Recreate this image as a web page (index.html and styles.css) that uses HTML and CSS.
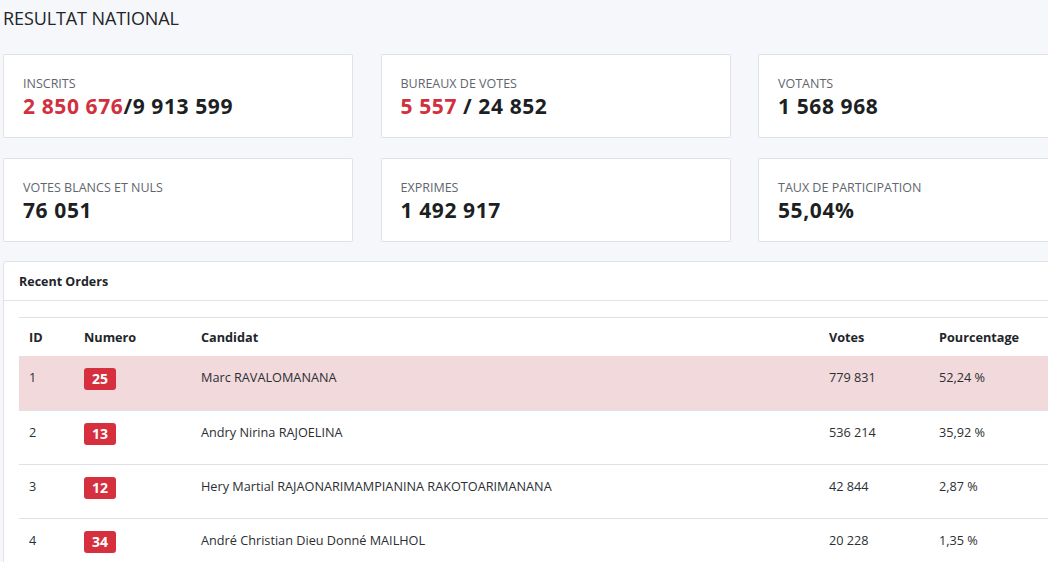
FILE: index.html
```html
<!DOCTYPE html>
<html>

<head>
  <title>Resultat National</title>
  <link rel="stylesheet" href="styles.css">
</head>

<body>
  <div class="page">
    <h1 class="page-title">RESULTAT NATIONAL</h1>

    <div class="stats">
      <div class="stat-card">
        <div class="stat-label">Inscrits</div>
        <div class="stat-value"><span class="red">2 850 676</span>/9 913 599</div>
      </div>
      <div class="stat-card">
        <div class="stat-label">Bureaux de votes</div>
        <div class="stat-value"><span class="red">5 557</span> / 24 852</div>
      </div>
      <div class="stat-card">
        <div class="stat-label">Votants</div>
        <div class="stat-value">1 568 968</div>
      </div>
      <div class="stat-card">
        <div class="stat-label">Votes blancs et nuls</div>
        <div class="stat-value">76 051</div>
      </div>
      <div class="stat-card">
        <div class="stat-label">Exprimes</div>
        <div class="stat-value">1 492 917</div>
      </div>
      <div class="stat-card">
        <div class="stat-label">Taux de participation</div>
        <div class="stat-value">55,04%</div>
      </div>
    </div>

    <div class="card">
      <div class="card-header">Recent Orders</div>
      <div class="card-body">
        <table class="results">
          <colgroup>
            <col class="c-id">
            <col class="c-num">
            <col class="c-name">
            <col class="c-votes">
            <col class="c-pct">
          </colgroup>
          <thead>
            <tr>
              <th>ID</th>
              <th>Numero</th>
              <th>Candidat</th>
              <th>Votes</th>
              <th>Pourcentage</th>
            </tr>
          </thead>
          <tbody>
            <tr class="winner">
              <td>1</td>
              <td><span class="badge">25</span></td>
              <td>Marc RAVALOMANANA</td>
              <td>779 831</td>
              <td>52,24 %</td>
            </tr>
            <tr>
              <td>2</td>
              <td><span class="badge">13</span></td>
              <td>Andry Nirina RAJOELINA</td>
              <td>536 214</td>
              <td>35,92 %</td>
            </tr>
            <tr>
              <td>3</td>
              <td><span class="badge">12</span></td>
              <td>Hery Martial RAJAONARIMAMPIANINA RAKOTOARIMANANA</td>
              <td>42 844</td>
              <td>2,87 %</td>
            </tr>
            <tr>
              <td>4</td>
              <td><span class="badge">34</span></td>
              <td>André Christian Dieu Donné MAILHOL</td>
              <td>20 228</td>
              <td>1,35 %</td>
            </tr>
          </tbody>
        </table>
      </div>
    </div>
  </div>
</body>

</html>
```

FILE: styles.css
```css
html,
body {
  margin: 0;
  padding: 0;
  overflow: hidden;
}

body {
  font-family: 'Open Sans', 'Noto Sans', sans-serif;
  background-color: #f5f7fa;
  color: #212529;
}

.page {
  width: 1106px;
  padding: 0 0 0 3px;
}

.page-title {
  font-size: 18px;
  font-weight: 400;
  margin: 0;
  padding-top: 7px;
  line-height: 22px;
  letter-spacing: -0.1px;
}

.stats {
  display: grid;
  grid-template-columns: repeat(3, 350px);
  column-gap: 27.5px;
  row-gap: 20px;
  margin-top: 25px;
}

.stat-card {
  background-color: #fff;
  border: 1px solid #dfe3e8;
  border-radius: 2px;
  height: 84px;
  box-sizing: border-box;
  padding: 20px 19px;
}

.stat-label {
  font-size: 12.5px;
  line-height: 18px;
  text-transform: uppercase;
  color: #5f666d;
}

.stat-value {
  font-size: 21px;
  font-weight: 700;
  line-height: 26px;
  color: #1c1f23;
  letter-spacing: 0.6px;
}

.red {
  color: #d1303f;
}

.card {
  margin-top: 19px;
  background-color: #fff;
  border: 1px solid #dfe3e8;
  border-radius: 3px;
}

.card-header {
  font-size: 12.5px;
  font-weight: 700;
  padding: 11px 15px 10px;
  line-height: 17px;
  border-bottom: 1px solid #dfe3e8;
}

.card-body {
  padding: 16px 15px;
}

.results {
  width: 1074px;
  border-collapse: collapse;
  table-layout: fixed;
  font-size: 12.7px;
  border-top: 1px solid #dee2e6;
}

.c-id { width: 55px; }
.c-num { width: 117px; }
.c-name { width: 628px; }
.c-votes { width: 110px; }
.c-pct { width: 164px; }

.results th {
  text-align: left;
  font-weight: 700;
  padding: 11px 10px;
  line-height: 16px;
}

.results td {
  padding: 11px 10px 0;
  height: 42px;
  line-height: 20px;
  vertical-align: top;
  color: #2b2f33;
  border-top: 1px solid #dee2e6;
}

.results thead + tbody tr:first-child td {
  border-top: none;
  height: 43px;
}

.results tr.winner td {
  background-color: #f2d9dc;
}

.badge {
  display: block;
  margin-top: 1px;
  width: 32px;
  height: 22px;
  line-height: 22px;
  border-radius: 3px;
  background-color: #d6303f;
  color: #fff;
  font-weight: 700;
  font-size: 14px;
  text-align: center;
}
```
